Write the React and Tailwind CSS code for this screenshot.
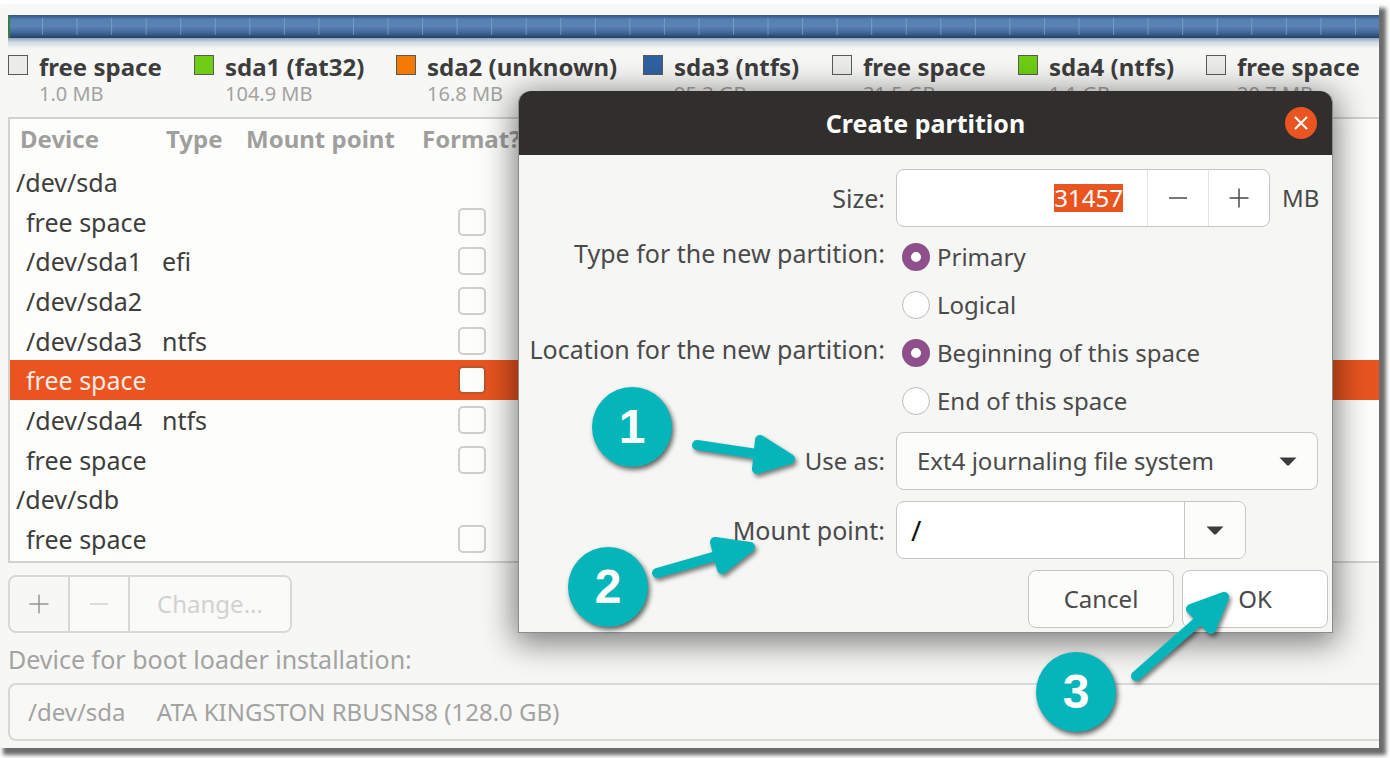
import { useEffect, useRef } from "react";

const legend = [
  { name: "free space", size: "1.0 MB", color: "bg-[#ececea]" },
  { name: "sda1 (fat32)", size: "104.9 MB", color: "bg-[#6ecd14]" },
  { name: "sda2 (unknown)", size: "16.8 MB", color: "bg-[#f37a02]" },
  { name: "sda3 (ntfs)", size: "95.3 GB", color: "bg-[#3061a2]" },
  { name: "free space", size: "31.5 GB", color: "bg-[#ececea]" },
  { name: "sda4 (ntfs)", size: "1.1 GB", color: "bg-[#6ecd14]" },
  { name: "free space", size: "20.7 MB", color: "bg-[#ececea]" },
];

const rows = [
  { device: "/dev/sda", disk: true },
  { device: "free space" },
  { device: "/dev/sda1", type: "efi" },
  { device: "/dev/sda2" },
  { device: "/dev/sda3", type: "ntfs" },
  { device: "free space", selected: true },
  { device: "/dev/sda4", type: "ntfs" },
  { device: "free space" },
  { device: "/dev/sdb", disk: true },
  { device: "free space" },
];

function Plus() {
  return (
    <svg className="size-5" viewBox="0 0 20 20" stroke="currentColor" strokeWidth="1.5" aria-hidden="true">
      <path d="M0.5 10h19M10 0.5v19" />
    </svg>
  );
}

function Minus() {
  return (
    <svg className="size-5" viewBox="0 0 20 20" stroke="currentColor" strokeWidth="1.5" aria-hidden="true">
      <path d="M1 10h18" />
    </svg>
  );
}

function Caret({ className = "" }) {
  return (
    <svg className={"h-[9px] w-[18px] " + className} viewBox="0 0 18 9" fill="#3c3c3c" aria-hidden="true">
      <path d="M0.5 0.5h17L10 8.2q-1 0.8-2 0z" />
    </svg>
  );
}

function DiskBar() {
  const ticks = Array.from({ length: 60 }, (_, i) => 34 + i * 34.55);
  return (
    <svg className="block h-[34px] w-full" aria-hidden="true">
      <defs>
        <linearGradient id="disk" x1="0" y1="0" x2="0" y2="1">
          <stop offset="0" stopColor="#34547c" />
          <stop offset="0.1" stopColor="#44699b" />
          <stop offset="0.2" stopColor="#5580b2" />
          <stop offset="0.5" stopColor="#5a84b4" />
          <stop offset="0.75" stopColor="#42699b" />
          <stop offset="0.95" stopColor="#294872" />
          <stop offset="1" stopColor="#223d62" />
        </linearGradient>
        <linearGradient id="reflection" x1="0" y1="0" x2="0" y2="1">
          <stop offset="0" stopColor="#8ea5bd" />
          <stop offset="0.4" stopColor="#d3dbe3" />
          <stop offset="1" stopColor="#f7f7f6" />
        </linearGradient>
      </defs>
      <rect width="100%" height="23" fill="url(#disk)" />
      <rect y="23" width="100%" height="11" fill="url(#reflection)" />
      {ticks.map((x) => (
        <rect key={x} x={x} y="3" width="1" height="17" fill="#8fb0d6" fillOpacity="0.6" />
      ))}
      <rect width="2" height="23" fill="#3c7a4a" />
    </svg>
  );
}

function Radio({ name, label, defaultChecked }) {
  return (
    <label className="flex h-12 items-center gap-[7px] pl-1.5">
      <input
        type="radio"
        name={name}
        defaultChecked={defaultChecked}
        className="size-7 appearance-none rounded-full border border-[#bdbdba] bg-white checked:border-[9px] checked:border-[#8f4f8b]"
      />
      {label}
    </label>
  );
}

function Arrow({ className, viewBox, shaft, head }) {
  return (
    <svg
      className={"absolute overflow-visible drop-shadow-[2px_3px_2px_rgba(0,0,0,0.5)] " + className}
      viewBox={viewBox}
      stroke="#04b5ba"
      fill="#04b5ba"
      strokeLinecap="round"
      strokeLinejoin="round"
      strokeWidth="10"
      aria-hidden="true"
    >
      <path d={shaft} />
      <path d={head} />
    </svg>
  );
}

function Step({ className, children }) {
  return (
    <div
      className={
        "absolute flex size-20 items-center justify-center rounded-full bg-[#04b5ba] font-['Liberation_Sans',sans-serif] text-5xl font-bold text-white shadow-[2px_3px_5px_rgba(0,0,0,0.6)] " +
        className
      }
    >
      {children}
    </div>
  );
}

function Dialog() {
  const size = useRef(null);
  useEffect(() => {
    size.current.focus();
    size.current.select();
  }, []);

  return (
    <section
      role="dialog"
      aria-labelledby="dialog-title"
      className="absolute top-[91px] left-[518px] w-[815px] rounded-t-xl border border-t-0 border-[#8b8b89] bg-[#f6f6f5] text-[24px] text-[#4a4a4a] shadow-[0_6px_32px_4px_rgba(0,0,0,0.5)]"
    >
      <header className="relative flex h-16 items-center justify-center rounded-t-xl bg-[#302f2d]">
        <h1 id="dialog-title" className="text-[25px] font-bold text-white">Create partition</h1>
        <button aria-label="Close" className="absolute right-[15px] flex size-8 items-center justify-center rounded-full bg-[#e95420]">
          <svg className="size-3.5" viewBox="0 0 14 14" stroke="#fff" strokeWidth="2" aria-hidden="true">
            <path d="M1 1l12 12M13 1l-12 12" />
          </svg>
        </button>
      </header>
      <form className="px-1 pt-3.5 pb-1" onSubmit={(e) => e.preventDefault()}>
        <div className="grid grid-cols-[362px_1fr] gap-x-[11px]">
          <label htmlFor="size" className="self-center text-right text-[25px]">Size:</label>
          <div className="flex items-center gap-3">
            <div className="flex h-[58px] w-[374px] overflow-hidden rounded-lg border border-[#c6c6c3] bg-white">
              <input
                id="size"
                ref={size}
                defaultValue="31457"
                className="w-0 grow pr-6 text-right leading-7 outline-none selection:bg-[#e95420] selection:text-white"
              />
              <button type="button" aria-label="Decrease" className="flex w-[61px] items-center justify-center border-l border-[#e2e2e0]"><Minus /></button>
              <button type="button" aria-label="Increase" className="flex w-[61px] items-center justify-center border-l border-[#e2e2e0]"><Plus /></button>
            </div>
            MB
          </div>
          <span className="mt-1.5 h-10 text-right text-[25px] leading-10">Type for the new partition:</span>
          <div role="radiogroup" aria-label="Type" className="mt-1.5">
            <Radio name="type" label="Primary" defaultChecked />
            <Radio name="type" label="Logical" />
          </div>
          <span className="h-10 text-right text-[25px] leading-10 whitespace-nowrap">Location for the new partition:</span>
          <div role="radiogroup" aria-label="Location">
            <Radio name="location" label="Beginning of this space" defaultChecked />
            <Radio name="location" label="End of this space" />
          </div>
          <label htmlFor="use-as" className="mt-[7px] self-center text-right">Use as:</label>
          <div className="relative mt-[7px] mr-2.5 flex items-center">
            <select id="use-as" className="h-[58px] w-full appearance-none rounded-lg border border-[#c6c6c3] bg-[#fcfcfa] pl-5">
              <option>Ext4 journaling file system</option>
            </select>
            <Caret className="pointer-events-none absolute right-[21px]" />
          </div>
          <label htmlFor="mount-point" className="mt-[11px] self-center text-right text-[25px]">Mount point:</label>
          <div className="mt-[11px] flex h-[58px] w-[350px] overflow-hidden rounded-lg border border-[#c6c6c3] bg-white">
            <input id="mount-point" defaultValue="/" className="w-0 grow pl-3.5 text-[28px] text-[#111] outline-none" />
            <button type="button" aria-label="Choose mount point" className="flex w-[61px] items-center justify-center border-l border-[#c6c6c3] bg-[#fcfcfa]"><Caret /></button>
          </div>
        </div>
        <div className="mt-[11px] flex justify-end gap-2">
          <button type="button" className="h-[58px] w-[146px] rounded-lg border border-[#c6c6c3] bg-[#fcfcfa]">Cancel</button>
          <button type="submit" className="h-[58px] w-[146px] rounded-lg border border-[#c6c6c3] bg-white">OK</button>
        </div>
      </form>
    </section>
  );
}

export default function App() {
  return (
    <div className="relative min-h-screen overflow-hidden bg-white pt-[5px] pr-[11px] pb-[9px] font-['Noto_Sans','Open_Sans',sans-serif] text-[25px] leading-8 text-[#3d3d3d]">
      <main className="bg-[#f7f7f6] pt-2.5 pl-2 pb-[7px] shadow-[5px_5px_4px_2px_#6b6b6b]">
        <DiskBar />
        <ul className="mt-0.5 grid grid-cols-[186px_202px_247px_189px_186px_188px_1fr] whitespace-nowrap">
          {legend.map((item, i) => (
            <li key={i} className="flex items-start gap-[11px]">
              <span className={"mt-1 size-5 shrink-0 border-[1.5px] border-[#5a5a58] " + item.color} />
              <span>
                <strong className="block text-[24px] leading-[31px] font-bold">{item.name}</strong>
                <span className="block text-[20px] leading-[23px] text-[#a3a3a1]">{item.size}</span>
              </span>
            </li>
          ))}
        </ul>
        <div className="mt-3 border-y-2 border-l-2 border-[#d2d2d0] bg-[#fdfdfb] pb-0.5">
          <table className="h-[440px] w-full table-fixed border-collapse text-left">
            <thead>
              <tr className="h-[43px] text-[24px] text-[#a09f9e]">
                <th className="w-[148px] pb-1 pl-2.5">Device</th>
                <th className="w-[80px] pb-1 pl-2">Type</th>
                <th className="w-[176px] pb-1 pl-2">Mount point</th>
                <th className="w-[120px] pb-1 pl-2">Format?</th>
                <th aria-label="Size" />
              </tr>
            </thead>
            <tbody>
              {rows.map((row, i) => (
                <tr key={i} className={row.selected ? "bg-[#e95420] text-[#fdebe4]" : ""}>
                  <td className={row.disk ? "pl-1.5" : "pl-4"}>{row.device}</td>
                  <td className="pl-1">{row.type}</td>
                  <td />
                  <td className="pl-11">
                    {!row.disk && (
                      <input
                        type="checkbox"
                        aria-label={"Format " + row.device}
                        className={
                          "block size-7 appearance-none rounded-[5px] border-2 bg-[#fdfdfb] " +
                          (row.selected ? "border-[#b9552f]" : "border-[#cfcfcd]")
                        }
                      />
                    )}
                  </td>
                  <td />
                </tr>
              ))}
            </tbody>
          </table>
        </div>
        <div className="mt-3 flex h-[58px] w-fit overflow-hidden rounded-lg border-2 border-[#d8d8d6]">
          <button aria-label="Add" className="flex w-[60px] items-center justify-center border-r-2 border-[#d8d8d6] text-[#969694]"><Plus /></button>
          <button aria-label="Remove" disabled className="flex w-[60px] items-center justify-center border-r-2 border-[#d8d8d6] bg-[#fafaf9] text-[#d2d2d0]"><Minus /></button>
          <button disabled className="w-40 bg-[#fafaf9] text-[24px] text-[#d2d2d0]">Change...</button>
        </div>
        <label htmlFor="boot" className="mt-2.5 block text-[#a3a3a1]">Device for boot loader installation:</label>
        <select id="boot" className="mt-2 block h-[58px] w-full appearance-none rounded-l-lg border-2 border-r-0 border-[#d8d8d6] bg-[#f8f8f7] pl-[18px] text-[24px] text-[#a3a3a1]">
          <option>{"/dev/sda\u00a0\u00a0\u00a0\u00a0 ATA KINGSTON RBUSNS8 (128.0 GB)"}</option>
        </select>
      </main>

      <Dialog />

      <Step className="top-[387px] left-[592px]">1</Step>
      <Step className="top-[547px] left-[568px]">2</Step>
      <Step className="top-[652px] left-[1036px]">3</Step>
      <Arrow className="top-[435px] left-[692px] h-10 w-[105px]" viewBox="692 435 105 40" shaft="M697 445L757 454" head="M760 440L757 469L790 459Z" />
      <Arrow className="top-[536px] left-[651px] h-[42px] w-[105px]" viewBox="651 536 105 42" shaft="M657 573L720 555" head="M715 542L722 569L750 547Z" />
      <Arrow className="top-[592px] left-[1130px] h-[90px] w-[99px]" viewBox="1130 592 99 90" shaft="M1136 676L1203 617" head="M1191 609L1211 629L1224 597Z" />
    </div>
  );
}
